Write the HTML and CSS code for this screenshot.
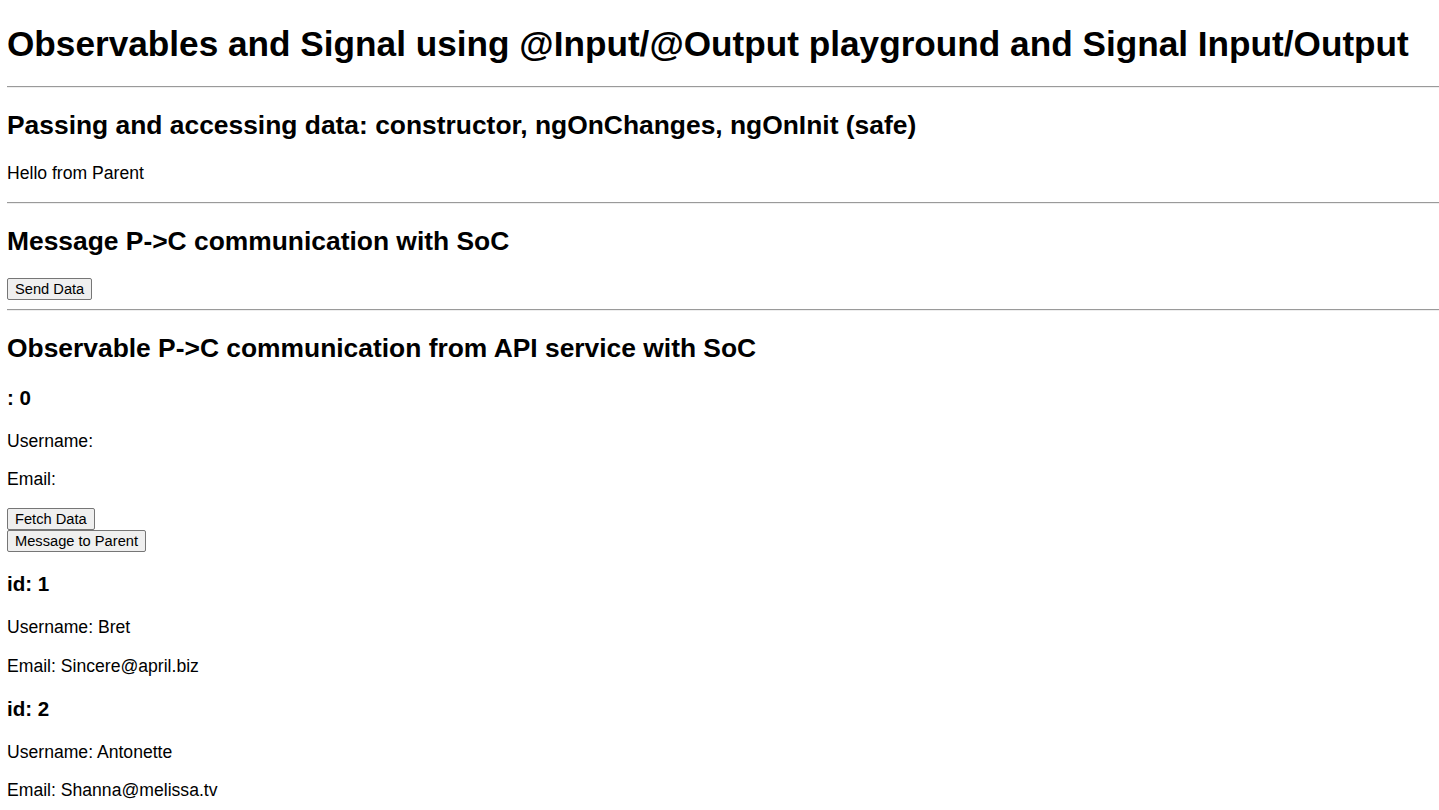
FILE: index.html
```html
<!DOCTYPE html>
<html>
<head>
<meta charset="utf-8">
<link rel="stylesheet" href="styles.css">
</head>
<body>
<div class="app">
<h1 class="title">Observables and Signal using @Input/@Output playground and Signal Input/Output</h1>
<hr>
<h2>Passing and accessing data: constructor, ngOnChanges, ngOnInit (safe)</h2>
<p>Hello from Parent</p>
<hr>
<h2>Message P-&gt;C communication with SoC</h2>
<button>Send Data</button>
<hr>
<h2>Observable P-&gt;C communication from API service with SoC</h2>
<h3>: 0</h3>
<p>Username: </p>
<p>Email: </p>
<button>Fetch Data</button><br>
<button>Message to Parent</button>
<h3>id: 1</h3>
<p>Username: Bret</p>
<p>Email: Sincere@april.biz</p>
<h3>id: 2</h3>
<p>Username: Antonette</p>
<p>Email: Shanna@melissa.tv</p>
</div>
</body>
</html>
```
FILE: styles.css
```css
html {
  font-size: 17.6px;
}
body {
  margin: 0;
  padding: 0 0 0 7px;
  font-family: "Liberation Sans", Arial, sans-serif;
  color: #000;
  background: #fff;
}
.app {
  display: block;
}
.title {
  margin: 23.6px 0 22.6px;
}
hr {
  margin: 8.8px 0;
  border: 0;
  border-top: 1px solid #9a9a9a;
  border-bottom: 1px solid #eeeeee;
}
button {
  font-family: "Liberation Sans", Arial, sans-serif;
  font-size: 14.67px;
  padding: 2px 7px;
  margin: 0;
  background: #efefef;
  border: 1px solid #767676;
  border-radius: 2px;
  color: #000;
}
```
